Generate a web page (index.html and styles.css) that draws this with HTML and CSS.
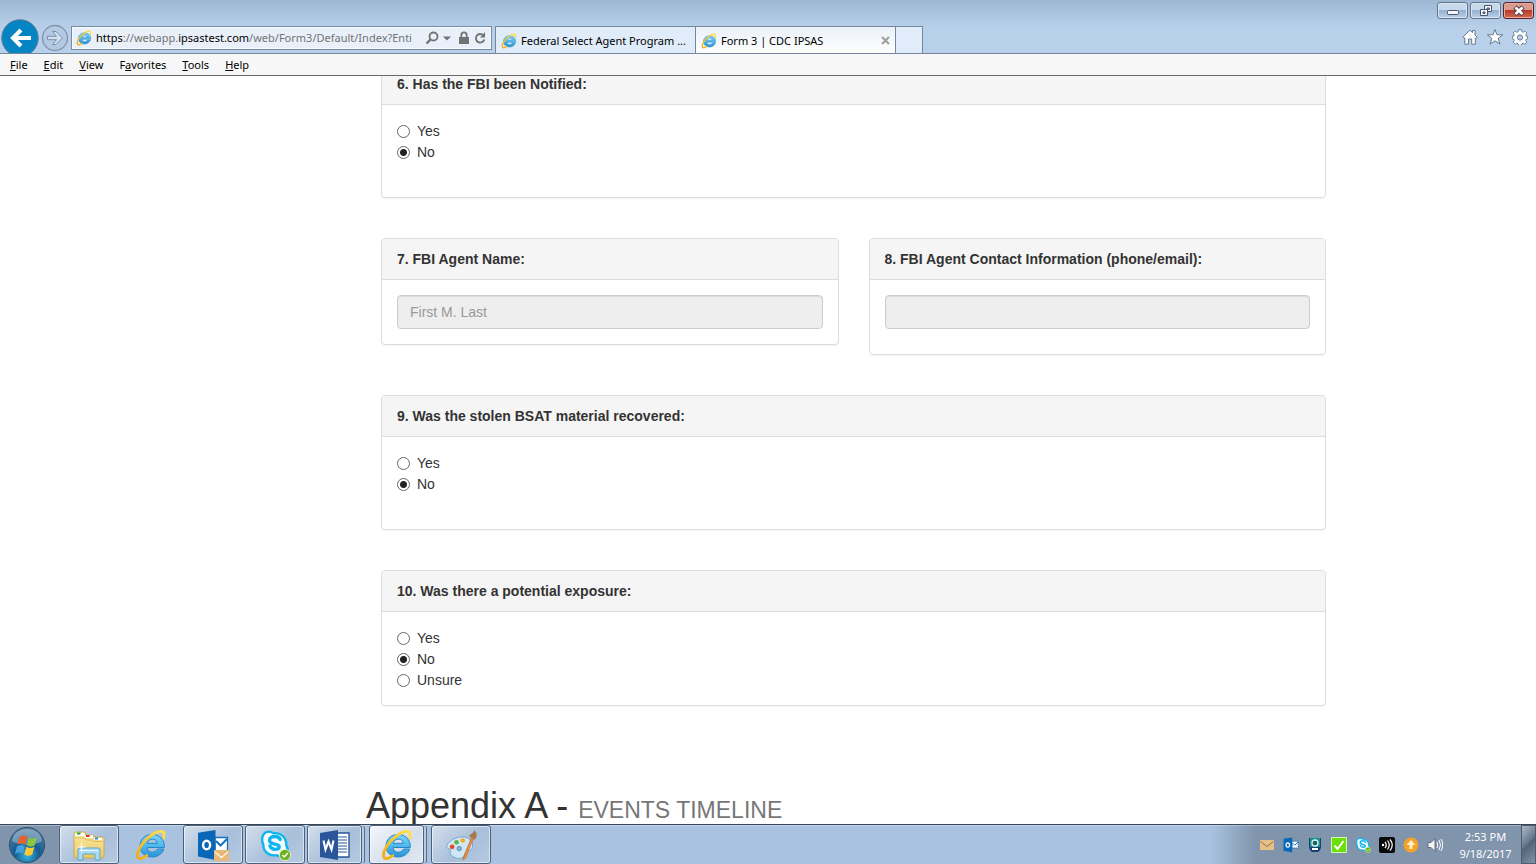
FILE: index.html
```html
<!DOCTYPE html>
<html lang="en">
<head>
<meta charset="utf-8">
<meta name="viewport" content="width=device-width, initial-scale=1">
<title>Form 3 | CDC IPSAS</title>
<link rel="stylesheet" href="styles.css">
</head>
<body>
<svg class="defs" aria-hidden="true">
  <defs>
    <linearGradient id="ie-blue" x1="0" y1="0" x2="0" y2="1">
      <stop offset="0" stop-color="#7fd4f8"/><stop offset=".5" stop-color="#4fb9ec"/><stop offset="1" stop-color="#2b93d6"/>
    </linearGradient>
    <linearGradient id="gold" x1="0" y1="1" x2="1" y2="0">
      <stop offset="0" stop-color="#f2ac12"/><stop offset="1" stop-color="#ffe14a"/>
    </linearGradient>
    <radialGradient id="orb" cx=".5" cy=".8" r=".8">
      <stop offset="0" stop-color="#35b5dc"/><stop offset=".45" stop-color="#135c92"/><stop offset="1" stop-color="#5d83a5"/>
    </radialGradient>
    <linearGradient id="folder" x1="0" y1="0" x2="0" y2="1">
      <stop offset="0" stop-color="#fae9a0"/><stop offset="1" stop-color="#ecc964"/>
    </linearGradient>
    <symbol id="ie" viewBox="0 0 32 32">
      <path d="M22.600 20h6.200c-1.700 5-6.300 8-11.800 8C9.800 28 5 23.400 5 17S9.800 5.500 17 5.500c7.500 0 12.300 5 12.300 12v1H12.200c.2 3 2.200 4.700 5 4.700 2.400 0 4.200-1.100 5.400-3.200ZM12.300 14.300h10c-.3-2.600-2.100-4.200-4.900-4.200s-4.700 1.600-5.100 4.200Z" fill="url(#ie-blue)" stroke="#2687c4" stroke-width="1"/>
      <path d="M28.600 9c1.300-4.200.6-6.200-1.800-6.500C20 1.700 9 10.800 4.500 19.500 1.300 25.700 2.200 30 5.700 29.600c2-.2 4-1.500 6-3" fill="none" stroke="url(#gold)" stroke-width="2.800" stroke-linecap="round"/>
    </symbol>
    <symbol id="skype" viewBox="0 0 32 32">
      <path d="M9.500 1.500c2.500 0 4 1 5 1.500 8-.8 14.500 5.200 14 13 2.500 4.500 1.500 8-.8 10.300-2.800 2.600-6.600 3-10.200 1.200C9 28.500 3 23 3 15.500c-2-5-1-8.500 1-11.200 1.400-1.800 3.300-2.800 5.500-2.800Z" fill="#10b5ee"/>
      <path d="M9.500 3.800c2.200 0 3.500 1 4.600 1.600 7-1 12.600 4 12 11 1.800 3.400 1.300 6.300-.5 8-2.200 1.800-5 1.900-7.700.6C10.500 26.200 5.200 21.800 5.400 15 3.600 11 4.200 8 5.600 6c1-1.400 2.300-2.200 3.900-2.200Z" fill="#f4fbff"/>
      <path d="M21.300 10.500c-1-2.300-3-3-5.500-3-3 0-5.300 1.400-5.300 3.700 0 5.300 9.700 2.500 9.700 6.500 0 1.800-1.900 2.700-4.300 2.700-2.700 0-4-1.400-5-3.400" fill="none" stroke="#10b5ee" stroke-width="3.300" stroke-linecap="round"/>
      <circle cx="26" cy="26" r="5.600" fill="#6bb119" stroke="#e1eecd"/>
      <path d="m23.300 26 2 2 3.500-4" fill="none" stroke="#fff" stroke-width="1.500"/>
    </symbol>
    <symbol id="outlook" viewBox="0 0 32 32">
      <path d="M18 8.500h12.500V22H18Z" fill="#fff" stroke="#1671bc" stroke-width="1.300"/>
      <path d="m19 12 4.500 4.500L30 10" fill="none" stroke="#1671bc" stroke-width="2"/>
      <path d="M1 3.700 18.500 1v30L1 27.500Z" fill="#0967b7"/>
      <ellipse cx="9.600" cy="16" rx="3.500" ry="4.300" fill="none" stroke="#fff" stroke-width="2.400"/>
    </symbol>
    <symbol id="envelope" viewBox="0 0 32 32">
      <path d="M17 21h15v11H17Z" fill="#e9b777"/><path d="m18 23 6.500 5.500L31 23" fill="none" stroke="#fff3df" stroke-width="1.500"/>
    </symbol>
  </defs>
</svg>

<header class="browser">
  <div class="nav-tools">
    <button class="back" aria-label="Back"><svg viewBox="0 0 38 38"><circle cx="19" cy="19" r="18.300" fill="#0584c4" stroke="#607f9a" stroke-width="1"/><path d="M30 19H12m8-8-8 8 8 8" fill="none" stroke="#fff" stroke-width="4"/></svg></button>
    <button class="forward" aria-label="Forward"><svg viewBox="0 0 28 28"><circle cx="14" cy="14" r="12.500" fill="#b3c9e3" stroke="#8194aa" stroke-width="1.300"/><path d="M6.500 12.300h9l-4-4.800h3.500l6.500 6.500-6.500 6.500h-3.500l4-4.800h-9Z" fill="#d2e0f0" stroke="#7d8ea6" stroke-width="1"/></svg></button>
    <div class="address">
      <svg class="ie-small"><use href="#ie"/></svg>
      <div class="url" role="textbox" aria-label="Address" contenteditable="true" spellcheck="false"><b>https</b>://webapp.<b>ipsastest.com</b>/web/Form3/Default/Index?Enti</div>
      <button aria-label="Search"><svg width="14" height="14" viewBox="0 0 14 14"><circle cx="8.500" cy="5.500" r="4" fill="none" stroke="#737373" stroke-width="1.800"/><path d="m5.500 8.500-4 4" stroke="#737373" stroke-width="2.400"/></svg></button>
      <button aria-label="Show address list"><svg width="8" height="14" viewBox="0 0 8 14"><path d="M0 5.500h8L4 9.500Z" fill="#737373"/></svg></button>
      <button aria-label="Security report" class="lock"><svg width="12" height="14" viewBox="0 0 12 14"><path d="M1 6h10v7H1Z" fill="#737373"/><path d="M3.300 6V4a2.700 2.700 0 0 1 5.400 0v2" fill="none" stroke="#737373" stroke-width="1.800"/></svg></button>
      <button aria-label="Refresh"><svg width="12" height="14" viewBox="0 0 12 14"><path d="M9.300 4.300A4.300 4.300 0 1 0 10.300 8.500" fill="none" stroke="#737373" stroke-width="1.900"/><path d="M11 1v5.500H6Z" fill="#737373"/></svg></button>
    </div>
  </div>
  <nav class="tabs" aria-label="Tabs">
    <button class="tab"><svg class="ie-small"><use href="#ie"/></svg><span>Federal Select Agent Program ...</span></button>
    <div class="tab active"><svg class="ie-small"><use href="#ie"/></svg><span>Form 3 | CDC IPSAS</span><button class="close-tab" aria-label="Close tab"><svg width="9" height="9" viewBox="0 0 9 9"><path d="m1 1 7 7m0-7-7 7" stroke="#a1a1a1" stroke-width="2.300"/></svg></button></div>
    <button class="new-tab" aria-label="New tab"></button>
  </nav>
  <div class="corner">
    <div class="window-controls">
      <button aria-label="Minimize"><svg width="12" height="12" viewBox="0 0 12 12"><rect x=".5" y="5.500" width="11" height="4" rx="1" fill="#f5f5f5" stroke="#48576c"/></svg></button>
      <button aria-label="Restore"><svg width="12" height="12" viewBox="0 0 12 12"><path d="M4.500.5h7v6h-7Z" fill="#f5f5f5" stroke="#48576c"/><path d="M7 3h2.500v1.500H7Z" fill="#89a9c8" stroke="#48576c"/><path d="M.5 4.500h7v6h-7Z" fill="#f5f5f5" stroke="#48576c"/><path d="M3 7h2v1.500H3Z" fill="#89a9c8" stroke="#48576c"/></svg></button>
      <button class="close" aria-label="Close"><svg width="12" height="12" viewBox="0 0 12 12"><path d="m2 2 8 7.500M10 2 2 9.500" stroke="#573e4c" stroke-width="4.600"/><path d="m2.500 2.500 7 6.500m0-6.500L2.500 9" stroke="#fff" stroke-width="2.600"/></svg></button>
    </div>
    <div class="commands">
      <button aria-label="Home"><svg viewBox="0 0 16 16"><path d="m.8 8.200 7.200-7 2.500 2.400V1.500h2.500v4.600l2.300 2.100-1.300 1.300-.7-.7v6.400H9.700V10H6.500v5.200H2.800V8.800l-.8.700Z" fill="#fff" stroke="#64798f"/></svg></button>
      <button aria-label="Favorites"><svg viewBox="0 0 16 16"><path d="m8 .5 2 5.300h5.700l-4.500 3.600 1.700 5.700L8 11.800l-4.900 3.300 1.700-5.700L.3 5.800H6Z" fill="#fff" stroke="#64798f"/></svg></button>
      <button aria-label="Tools"><svg viewBox="0 0 16 16"><path d="M6.500.7h3l.4 2 1.300.6 1.700-1.200 2 2-1.200 1.700.5 1.300 1.500.3v2.400l-1.600.5-.5 1.200 1.200 1.800-2 1.900-1.600-1.100-1.300.5-.4 1.700h-3l-.4-1.700-1.300-.5-1.600 1.100-2-1.900 1.200-1.800-.5-1.200-1.600-.5V7.400l1.500-.3.500-1.300L1.100 4.100l2-2 1.700 1.200 1.300-.6Z" fill="#fff" stroke="#64798f" stroke-width=".9"/><circle cx="8" cy="8.500" r="2.600" fill="#b9cfea" stroke="#64798f"/></svg></button>
    </div>
  </div>
</header>
<nav class="menu" aria-label="Menu bar">
  <button><u>F</u>ile</button><button><u>E</u>dit</button><button><u>V</u>iew</button><button>F<u>a</u>vorites</button><button><u>T</u>ools</button><button><u>H</u>elp</button>
</nav>

<main class="page">
  <div class="container">
    <form class="questions">
      <fieldset class="panel">
        <legend class="panel-title">6. Has the FBI been Notified:</legend>
        <div class="panel-body choices">
          <label><input type="radio" name="notified">Yes</label>
          <label><input type="radio" name="notified" checked>No</label>
        </div>
      </fieldset>
      <div class="row">
        <div class="panel">
          <label class="panel-title" for="agent-name">7. FBI Agent Name:</label>
          <div class="panel-body"><input class="field" id="agent-name" type="text" placeholder="First M. Last" disabled></div>
        </div>
        <div class="panel">
          <label class="panel-title" for="agent-contact">8. FBI Agent Contact Information (phone/email):</label>
          <div class="panel-body contact"><input class="field" id="agent-contact" type="text" disabled></div>
        </div>
      </div>
      <fieldset class="panel">
        <legend class="panel-title">9. Was the stolen BSAT material recovered:</legend>
        <div class="panel-body choices">
          <label><input type="radio" name="recovered">Yes</label>
          <label><input type="radio" name="recovered" checked>No</label>
        </div>
      </fieldset>
      <fieldset class="panel">
        <legend class="panel-title">10. Was there a potential exposure:</legend>
        <div class="panel-body choices">
          <label><input type="radio" name="exposure">Yes</label>
          <label><input type="radio" name="exposure" checked>No</label>
          <label><input type="radio" name="exposure">Unsure</label>
        </div>
      </fieldset>
    </form>
    <h1>Appendix A - <small>EVENTS TIMELINE</small></h1>
  </div>
</main>

<footer class="taskbar">
  <button class="start" aria-label="Start"><svg viewBox="0 0 38 38"><circle cx="19" cy="19" r="17.500" fill="url(#orb)" stroke="#2b4d6c"/><path d="M4 15C6 6 12 3 19 3s13 3 15 12c-8 5-22 5-30 0Z" fill="#fff" opacity=".3"/><path d="M11.500 11c2.500-2 5-2 7.800-.3l-2 7.700c-3-1.500-5.300-1.400-8 .5Z" fill="#e8612c"/><path d="M20.800 11.500c3 1.700 5.500 1.500 8.200-.2l-2.200 7.900c-2.700 1.700-5.200 1.600-8 0Z" fill="#8cc63c"/><path d="M8.900 20.400c2.700-1.900 5-2 8-.4l-2.100 7.600c-2.800-1.600-5-1.500-7.900.4Z" fill="#4a9ede"/><path d="M18.400 20.800c2.800 1.600 5.300 1.600 8 0l-2.100 7.700c-2.800 1.700-5.200 1.500-8 0Z" fill="#fcc935"/></svg></button>
  <div class="apps">
    <button class="app" aria-label="Windows Explorer"><svg viewBox="0 0 32 32"><path d="M1 4.500 2 3h10l1 3h7l1 2h9l1 1.500V27l-1 2H2l-1-2Z" fill="url(#folder)" stroke="#c9a24c" stroke-width=".8"/><path d="M2.500 4h9v3h-9ZM12 6.500h8V9h-8Zm9 2.500h8v2h-8Z" fill="#fff"/><path d="M4 3.500h3.500v2H4Z" fill="#21a52b"/><path d="M13 6h3.500v2H13Z" fill="#d93325"/><path d="M22 8.500h3v2h-3Z" fill="#2a8edb"/><path d="M2 9h10l1 2h7l1 1.500h9" fill="none" stroke="#d7b45a" stroke-width=".8"/><path d="M5 21q0-2 2-2h18q2 0 2 2v10h-5v-6H10v6H5Z" fill="#a9dcf2" stroke="#5ba8cb"/><path d="M7 21.500h18" stroke="#e5f7fd"/><path d="m8.500 12 .8 5.200 5.200.8-5.200.8-.8 5.200-.8-5.200-5.200-.8 5.200-.8Z" fill="#fff" opacity=".9"/></svg></button>
    <button class="app plain" aria-label="Internet Explorer"><svg viewBox="0 0 32 32"><use href="#ie"/></svg></button>
    <button class="app" aria-label="Outlook"><svg viewBox="0 0 32 32"><use href="#outlook"/><use href="#envelope"/></svg></button>
    <button class="app" aria-label="Skype for Business"><svg viewBox="0 0 32 32"><use href="#skype"/></svg></button>
    <button class="app stacked" aria-label="Word"><svg viewBox="0 0 32 32"><path d="M16 4h14v24H16Z" fill="#fff" stroke="#2a5699" stroke-width="1.400"/><path d="M18 8h10M18 11h10M18 14h10M18 17h10M18 20h10M18 23h10" stroke="#2a5699" stroke-width="1.200"/><path d="M1 4 19 1v30L1 28Z" fill="#2a5699"/><path d="m4.500 11.500 2 9 3-8 3 8 2-9" fill="none" stroke="#fff" stroke-width="2.100"/></svg></button>
    <button class="app stacked current" aria-label="Form 3 | CDC IPSAS"><svg viewBox="0 0 32 32"><use href="#ie"/></svg></button>
    <button class="app" aria-label="Paint"><svg viewBox="0 0 36 36"><path d="M13 10c8-3 17 0 18 7 .8 6-4 8-7 9-2 .8-1 3-3 5-4 4-12 2-15-3-1-2 1-3 0-5-1-1-3-1-4-2-1-4 5-9.500 11-11Z" fill="#cfe6f5" stroke="#6fa4c9"/><circle cx="8" cy="20" r="2.700" fill="#e04a30"/><circle cx="13" cy="15" r="2.600" fill="#56b742"/><circle cx="20" cy="13" r="2.600" fill="#f2ae22"/><circle cx="16" cy="22" r="2.400" fill="#89b9db" stroke="#4a7da5"/><path d="m30 9 2 1.500L23 33l-3 2 1-4Z" fill="#ee8d36" stroke="#b45d1e" stroke-width=".6"/><path d="M27 8c2-3 5-3 6-7 3 3 4 8 0 11Z" fill="#a77850"/></svg></button>
  </div>
  <div class="tray">
    <svg viewBox="0 0 16 16"><path d="M1 3h14v10H1Z" fill="#e8bf85"/><path d="m1.500 4.500 6.500 5 6.500-5" fill="none" stroke="#84705a"/></svg>
    <svg viewBox="0 0 32 32"><use href="#outlook"/></svg>
    <svg viewBox="0 0 16 16"><path d="M2 1h12v8q0 4-3 6H5q-3-2-3-6Z" fill="#183e75"/><path d="M3 1h10v9H3Z" fill="#1a938c"/><circle cx="8" cy="6" r="3" fill="#17675f" stroke="#d9f4ee" stroke-width="1.300"/><path d="M5 11h6v2H5Z" fill="#fff"/></svg>
    <svg viewBox="0 0 16 16"><path d="M.5.5h15v15H.5Z" fill="#6cdf08" stroke="#d6f7b5"/><path d="m3.500 8.500 3 3.500 6-8" fill="none" stroke="#fff" stroke-width="2"/></svg>
    <svg viewBox="0 0 32 32"><use href="#skype"/></svg>
    <svg viewBox="0 0 16 16"><rect width="16" height="16" rx="2" fill="#090909"/><circle cx="4" cy="8" r="1.200" fill="#fff"/><path d="M6 5q2.500 3 0 6M8.500 3.500q3.500 4.500 0 9M11 2.500q4.500 5.500 0 11" fill="none" stroke="#fff" stroke-width="1.200"/></svg>
    <svg viewBox="0 0 16 16"><circle cx="8" cy="8" r="7.500" fill="#f6a12a"/><path d="M8 3 3.500 8h3v4h3V8h3Z" fill="#fff2c9"/></svg>
    <svg viewBox="0 0 16 16"><path d="M1 5.500h3l4-4v13l-4-4H1Z" fill="#f5f5f5" stroke="#4c5867" stroke-width=".8"/><path d="M10 5q1.500 3 0 6m2-8q3 5 0 10m2-11q3.500 6 0 12" fill="none" stroke="#fff"/></svg>
  </div>
  <div class="clock"><time>2:53 PM</time><time>9/18/2017</time></div>
  <button class="show-desktop" aria-label="Show desktop"></button>
</footer>
</body>
</html>
```
FILE: styles.css
```css
* { box-sizing: border-box; }
body {
  margin: 0;
  height: 100vh;
  display: flex;
  flex-direction: column;
  overflow: hidden;
  background: #fff;
  color: #333;
  font: 14px/20px "Liberation Sans", Arial, sans-serif;
}
button { margin: 0; padding: 0; border: 0; background: none; color: inherit; font: inherit; }
svg { display: block; flex: none; }
.defs { position: absolute; width: 0; height: 0; }

/* Browser frame */
.browser, .menu, .taskbar { flex: none; font-family: "Noto Sans", sans-serif; font-size: 11px; }
.browser {
  display: flex;
  height: 54px;
  overflow: hidden;
  background: linear-gradient(#9db7d2, #b9d0eb 28px);
  border-bottom: 1px solid #75879d;
  line-height: 16px;
  color: #000;
}
.nav-tools { display: flex; align-items: flex-start; width: 495px; padding: 19px 3px 0 1px; }
.back { width: 38px; height: 38px; }
.forward { width: 28px; margin: 5px 2px 0; }
.address {
  flex: 1;
  min-width: 0;
  display: flex;
  align-items: center;
  gap: 4px;
  height: 24px;
  margin-top: 7px;
  padding: 0 5px 0 4px;
  background: #e9f0f9;
  border: 1px solid #758ba3;
  box-shadow: inset 0 0 0 1px #f7faff;
}
.ie-small { width: 16px; height: 16px; }
.url { flex: 1; min-width: 0; overflow: hidden; white-space: nowrap; color: #737373; }
.url b { font-weight: 400; color: #000; }
.lock { margin-left: 3px; }
.tabs { display: flex; padding-top: 26px; }
.tab, .new-tab { border: 1px solid #75879d; border-bottom: 0; background: #e0ecf9; }
.tab { display: flex; align-items: center; gap: 4px; width: 201px; padding: 1px 5px 0; margin-right: -1px; white-space: nowrap; }
.tab.active { background: linear-gradient(#ebf1f8, #fff); }
.close-tab { margin-left: auto; }
.new-tab { width: 28px; }
.corner { margin-left: auto; display: flex; flex-direction: column; align-items: flex-end; gap: 10px; padding: 2px 2px 0 0; }
.window-controls { display: flex; gap: 2px; }
.window-controls button {
  display: grid;
  place-items: center;
  width: 31px;
  height: 17px;
  border: 1px solid #61758d;
  border-radius: 3px;
  background: linear-gradient(#c7d8ea 45%, #96b2d0 50%, #b8d0e7);
  box-shadow: inset 0 0 0 1px #dae7f3;
}
.window-controls .close { border-color: #59202b; background: linear-gradient(#dc9a8c 45%, #b83a26 50%, #d56c50); box-shadow: inset 0 0 0 1px #e7aaa0; }
.commands { display: flex; gap: 9px; padding-right: 6px; }
.commands svg { width: 16px; height: 16px; }
.menu {
  display: flex;
  gap: 16px;
  height: 22px;
  padding: 0 10px;
  background: #f7f7f7;
  border-bottom: 1px solid #696969;
  color: #000;
  line-height: 20px;
}

/* Page */
.page { flex: 1; min-height: 0; overflow: hidden; padding-right: 24px; }
.container { max-width: 1170px; margin: 0 auto; padding-left: 195px; }
.questions { display: flex; flex-direction: column; gap: 40px; margin-top: -13px; padding: 0 15px; }
.panel {
  min-width: 0;
  margin: 0;
  padding: 0;
  border: 1px solid #ddd;
  border-radius: 4px;
  box-shadow: 0 1px 1px rgba(0, 0, 0, .05);
}
.panel-title {
  display: block;
  float: left;
  width: 100%;
  padding: 10px 15px;
  background: #f5f5f5;
  border-bottom: 1px solid #ddd;
  border-radius: 3px 3px 0 0;
  font-weight: 700;
}
.panel-body { clear: both; padding: 15px; }
.choices { min-height: 92px; }
.choices label { display: flex; align-items: center; gap: 7px; height: 21px; padding-top: 1px; }
.choices input {
  appearance: none;
  width: 13px;
  height: 13px;
  margin: 0;
  border: 1px solid #666;
  border-radius: 50%;
  background: #fff;
}
.choices input:checked { background: radial-gradient(circle, #222 3px, #fff 4px); }
.row { display: grid; grid-template-columns: 1fr 1fr; gap: 30px; align-items: start; }
.field {
  display: block;
  width: 100%;
  height: 34px;
  padding: 6px 12px;
  border: 1px solid #ccc;
  border-radius: 4px;
  background: #eee;
  box-shadow: inset 0 1px 1px rgba(0, 0, 0, .075);
  font: inherit;
}
.field::placeholder { color: #999; }
.contact { padding-bottom: 25px; }
h1 { margin: 80px 0 0; font-size: 36px; line-height: 40px; font-weight: 400; white-space: nowrap; }
h1 small { font-size: 23px; color: #777; }

/* Taskbar */
.taskbar {
  display: flex;
  height: 40px;
  background: linear-gradient(90deg, #8094ac 58px, #a8c2e0 62px, #a8c2e0 calc(100% - 325px), #8094ac calc(100% - 280px));
  border-top: 1px solid #38465a;
  box-shadow: inset 0 1px rgba(255, 255, 255, .3);
}
.start { width: 59px; padding-left: 8px; }
.start svg { width: 38px; height: 38px; }
.apps { display: flex; gap: 2px; }
.app {
  display: grid;
  place-items: center;
  width: 60px;
  height: 39px;
  border: 1px solid #4d6078;
  border-radius: 3px;
  background: linear-gradient(135deg, #d3dfec, #a9bfda 55%, #b4c9e1);
  box-shadow: inset 0 0 0 1px rgba(255, 255, 255, .55);
}
.app svg { width: 32px; height: 32px; }
.app.plain { border-color: transparent; background: none; box-shadow: none; }
.app.stacked { width: 55px; margin-right: 5px; box-shadow: inset 0 0 0 1px rgba(255, 255, 255, .55), 3px 0 0 -1px #b8cce3, 4px 0 0 -1px #5b6d84; }
.app.current { background: linear-gradient(135deg, #f3f7fb, #d3deec 60%, #e2eaf4); }
.tray { display: flex; align-items: center; gap: 8px; margin-left: auto; }
.tray svg { width: 16px; height: 16px; }
.clock { display: flex; flex-direction: column; align-items: center; width: 78px; padding: 3px 0 0 7px; color: #fff; line-height: 17px; }
.show-desktop { width: 15px; border: 1px solid #4c5d72; background: linear-gradient(135deg, #aeb9c6, #66778c 45%, #526378 50%, #8594a7); }
```
